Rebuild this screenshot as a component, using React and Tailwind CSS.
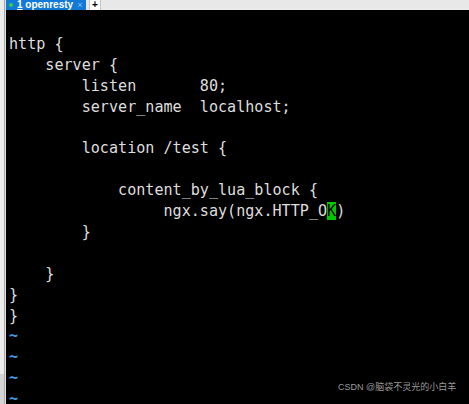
import React from "react";

const lines = [
  "http {",
  "    server {",
  "        listen       80;",
  "        server_name  localhost;",
  "",
  "        location /test {",
  "",
  "            content_by_lua_block {",
  "                 ngx.say(ngx.HTTP_O",
  "        }",
  "",
  "    }",
  "}",
  "}",
];

export default function App() {
  return (
    <div className="relative w-[469px] h-[404px] bg-black overflow-hidden flex">
      <div className="w-[6px] h-full flex">
        <div className="w-[4px] h-full flex flex-col">
          <div className="flex-1 bg-[#ececec]" />
          <div className="h-[30px] bg-[#d4d4d4]" />
        </div>
        <div className="w-[1px] h-full bg-[#a8a8a8]" />
        <div className="w-[1px] h-full bg-[#e0e0e0]" />
      </div>
      <div className="flex-1 flex flex-col">
        <div className="h-[12px] flex bg-[#e8e8e8] items-stretch">
          <div className="w-[80px] bg-[#1279d6] flex items-center pl-[3px] gap-[4px] text-white whitespace-nowrap" style={{ fontFamily: "Arial, 'Liberation Sans', sans-serif" }}>
            <span className="shrink-0 w-[4px] h-[4px] rounded-full bg-[#3ad03a]" />
            <span className="text-[10px] leading-none font-bold whitespace-nowrap">
              <span className="underline">1</span> openresty
            </span>
            <span className="ml-auto mr-[4px] text-[9px] leading-none text-[#8fc0ee]">×</span>
          </div>
          <div className="ml-[3px] w-[12px] bg-white border-x border-[#c8c8c8] flex items-center justify-center text-[10px] leading-none font-bold text-black" style={{ fontFamily: "Arial, 'Liberation Sans', sans-serif" }}>+</div>
        </div>
        <div className="h-[2px] bg-[#5aa6e6]" />
        <div
          className="pt-[24px] pl-[3px] text-[15.1px] leading-[20.9px] text-[#dedede] whitespace-pre"
          style={{ fontFamily: "'DejaVu Sans Mono', monospace" }}
        >
          {lines.map((l, i) => (
            <div key={i} className="h-[20.9px]">
              {l}
              {i === 8 && (
                <>
                  <span className="bg-[#00c800] text-black">K</span>)
                </>
              )}
            </div>
          ))}
          {[0, 1, 2, 3].map((i) => (
            <div key={"t" + i} className="h-[20.9px] text-[#3c9ee6] font-bold">~</div>
          ))}
        </div>
      </div>
      <div
        className="absolute left-[338px] top-[383px] text-[9px] leading-none text-[#9a9a9a] whitespace-nowrap"
        style={{ fontFamily: "'Liberation Sans', 'Noto Sans CJK SC', sans-serif" }}
      >
        CSDN @脑袋不灵光的小白羊
      </div>
    </div>
  );
}
